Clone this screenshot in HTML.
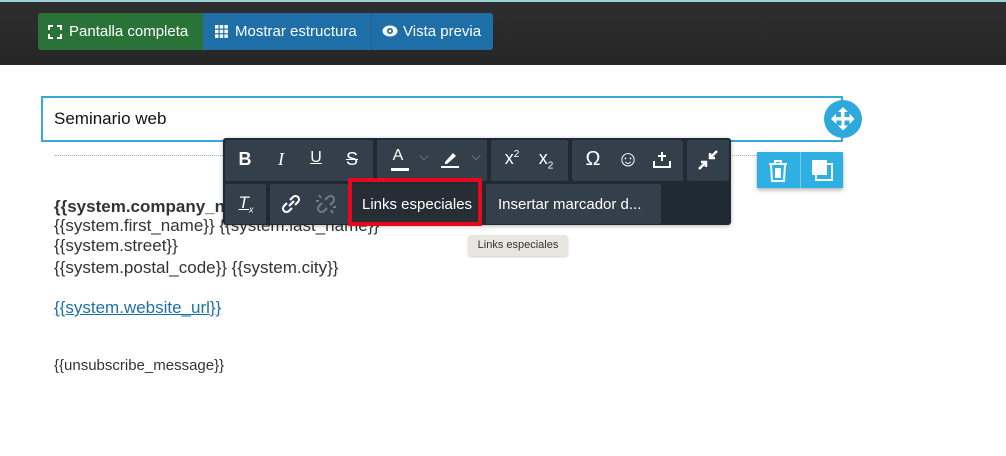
<!DOCTYPE html>
<html><head><meta charset="utf-8"><style>
*{box-sizing:border-box;margin:0;padding:0}
body{width:1006px;height:456px;background:#fff;font-family:"Liberation Sans",sans-serif;position:relative;overflow:hidden}
.hdr{position:absolute;left:0;top:0;width:1006px;height:65px;background:linear-gradient(#2e2e2e,#262626);border-top:2px solid #9fd3d8}
.btn{position:absolute;top:11px;height:37px;color:#fff;font-size:15px;line-height:37px;padding-left:9px}
.abs{position:absolute}
.tb{position:absolute;left:223px;top:138px;width:508px;height:87px;background:#1f2a33;border-radius:3px;box-shadow:0 1px 4px rgba(0,0,0,.3)}
.g{position:absolute;background:#333f4a;border-radius:2px}
.ic{position:absolute;color:#fff;font-size:18px;text-align:center;width:30px}
.txt{position:absolute;left:54px;font-size:17px;color:#333;line-height:20px}
</style></head><body>
<div class="hdr">
<div class="btn" style="left:38px;width:165px;background:#2a7338;border-radius:3px 0 0 3px">
<svg class="abs" style="left:10px;top:12px" width="14" height="14" viewBox="0 0 14 14" fill="none" stroke="#fff" stroke-width="2"><path d="M1 5V1h4M9 1h4v4M13 9v4H9M5 13H1V9"/></svg><span style="margin-left:22px">Pantalla completa</span></div>
<div class="btn" style="left:203px;width:168px;background:#1e6ea8"><svg class="abs" style="left:12px;top:12px" width="13" height="13" fill="#fff"><rect x="0" y="0" width="3.5" height="3.5"/><rect x="4.7" y="0" width="3.5" height="3.5"/><rect x="9.4" y="0" width="3.5" height="3.5"/><rect x="0" y="4.7" width="3.5" height="3.5"/><rect x="4.7" y="4.7" width="3.5" height="3.5"/><rect x="9.4" y="4.7" width="3.5" height="3.5"/><rect x="0" y="9.4" width="3.5" height="3.5"/><rect x="4.7" y="9.4" width="3.5" height="3.5"/><rect x="9.4" y="9.4" width="3.5" height="3.5"/></svg><span style="margin-left:23px">Mostrar estructura</span></div>
<div class="btn" style="left:371px;width:122px;background:#1e6ea8;border-left:1px solid #2a5f8a;border-radius:0 3px 3px 0"><svg class="abs" style="left:10px;top:12px" width="16" height="12" viewBox="0 0 16 12"><ellipse cx="8" cy="6" rx="7.5" ry="5.5" fill="#fff"/><circle cx="8" cy="6" r="3" fill="#1e6ea8"/><circle cx="8" cy="6" r="1.3" fill="#fff"/></svg><span style="margin-left:22px">Vista previa</span></div>
</div>

<div class="abs" style="left:41px;top:96px;width:802px;height:46px;border:2px solid #35a9dc"></div>
<div class="abs" style="left:54px;top:109px;font-size:17px;color:#111">Seminario web</div>
<div class="abs" style="left:824px;top:100px;width:38px;height:38px;border-radius:50%;background:#2fa8dc"><svg width="38" height="38" viewBox="0 0 38 38" fill="#fff"><path d="M19 7l5 5h-3.5v5h5v-3.5l5 5.5-5 5v-3.5h-5v5H24l-5 5-5-5h3.5v-5h-5V24L7 19l5-5.5V17h5v-5H14z"/></svg></div>
<div class="abs" style="left:55px;top:155px;width:702px;border-top:1px dotted #aaa"></div>
<div class="abs" style="left:757px;top:152px;width:86px;height:36px;background:#2fb0e3;box-shadow:0 2px 4px rgba(0,0,0,.3)"></div>
<div class="abs" style="left:800px;top:152px;width:1px;height:36px;background:#7cc8e8"></div>
<svg class="abs" style="left:767px;top:159px" width="22" height="24" viewBox="0 0 22 24" fill="none" stroke="#fff" stroke-width="2"><path d="M2 5h18M8 5V2h6v3M4 5l1 17h12l1-17M9 9v10M11 9v10M13 9v10"/></svg>
<svg class="abs" style="left:811px;top:159px" width="22" height="22" viewBox="0 0 22 22"><rect x="5" y="5" width="16" height="16" fill="none" stroke="#fff" stroke-width="2"/><rect x="1" y="1" width="15" height="15" fill="#fff"/></svg>

<div class="txt" style="top:197px;font-weight:bold;font-size:17px">{{system.company_name}}</div>
<div class="txt" style="top:216px">{{system.first_name}} {{system.last_name}}</div>
<div class="txt" style="top:236px">{{system.street}}</div>
<div class="txt" style="top:258px">{{system.postal_code}} {{system.city}}</div>
<div class="txt" style="top:298px;color:#1d6fa8;text-decoration:underline">{{system.website_url}}</div>
<div class="txt" style="top:356px;font-size:15px">{{unsubscribe_message}}</div>

<div class="tb">
<div class="g" style="left:2px;top:2px;width:148px;height:41px"></div>
<div class="g" style="left:154px;top:2px;width:110px;height:41px"></div>
<div class="g" style="left:268px;top:2px;width:77px;height:41px"></div>
<div class="g" style="left:349px;top:2px;width:111px;height:41px"></div>
<div class="g" style="left:464px;top:2px;width:42px;height:41px"></div>
<div class="g" style="left:2px;top:46px;width:41px;height:40px"></div>
<div class="g" style="left:47px;top:46px;width:78px;height:40px"></div>
<div class="g" style="left:129px;top:46px;width:130px;height:40px;background:#262d34"></div>
<div class="g" style="left:263px;top:46px;width:175px;height:40px"></div>
<div class="ic" style="left:7px;top:11px;font-weight:bold">B</div>
<div class="ic" style="left:43px;top:11px;font-family:'Liberation Serif';font-style:italic">I</div>
<div class="ic" style="left:78px;top:11px;text-decoration:underline;font-size:16px">U</div>
<div class="ic" style="left:114px;top:11px;text-decoration:line-through">S</div>
<div class="ic" style="left:160px;top:9px;font-size:16px">A</div>
<div class="abs" style="left:168px;top:30px;width:18px;height:3px;background:#fff"></div>
<div class="ic" style="left:186px;top:11px;font-size:12px;color:#8a96a0">⌵</div>
<svg class="abs" style="left:218px;top:12px" width="18" height="18" viewBox="0 0 18 18" fill="#fff"><path d="M4 12l8-9 3 3-9 8H4z"/><rect x="0" y="16" width="18" height="2.5"/></svg>
<div class="ic" style="left:238px;top:11px;font-size:12px;color:#8a96a0">⌵</div>
<div class="ic" style="left:274px;top:10px">x<sup style="font-size:10px">2</sup></div>
<div class="ic" style="left:308px;top:10px">x<sub style="font-size:10px">2</sub></div>
<div class="ic" style="left:355px;top:10px;font-size:20px">Ω</div>
<div class="ic" style="left:390px;top:8px;font-size:22px">☺</div>
<svg class="abs" style="left:430px;top:13px" width="18" height="17" viewBox="0 0 18 17" fill="none" stroke="#fff" stroke-width="2"><path d="M9 1v9M5 5h8M1 10v6h16v-6"/></svg>
<svg class="abs" style="left:474px;top:11px" width="22" height="22" viewBox="0 0 22 22" fill="none" stroke="#fff" stroke-width="2.5"><path d="M20 2l-7 7M13 4v5h5M2 20l7-7M4 13h5v5"/></svg>
<div class="ic" style="left:8px;top:55px;font-style:italic;text-decoration:underline;font-size:17px">T<sub style="font-size:9px;text-decoration:none">x</sub></div>
<svg class="abs" style="left:57px;top:55px" width="22" height="22" viewBox="0 0 22 22" fill="none" stroke="#fff" stroke-width="2"><path d="M9 13l5-5M10 7l3-3a3 3 0 015 5l-3 3M12 15l-3 3a3 3 0 01-5-5l3-3"/></svg>
<svg class="abs" style="left:92px;top:55px" width="22" height="22" viewBox="0 0 22 22" fill="none" stroke="#6f7a84" stroke-width="2"><path d="M10 7l3-3a3 3 0 015 5l-3 3M12 15l-3 3a3 3 0 01-5-5l3-3M4 2l2 3M18 20l-2-3M1 8h3M21 14h-3"/></svg>
<div class="abs" style="left:139px;top:58px;color:#fff;font-size:15px">Links especiales</div>
<div class="abs" style="left:275px;top:58px;color:#fff;font-size:15px">Insertar marcador d...</div>
</div>
<div class="abs" style="left:348px;top:178px;width:134px;height:48px;border:4px solid #e8081e"></div>
<div class="abs" style="left:468px;top:235px;width:100px;height:21px;background:#e9e6e2;border-radius:3px;box-shadow:0 1px 2px rgba(0,0,0,.2);font-size:11px;color:#333;line-height:21px;text-align:center">Links especiales</div>
</body></html>
